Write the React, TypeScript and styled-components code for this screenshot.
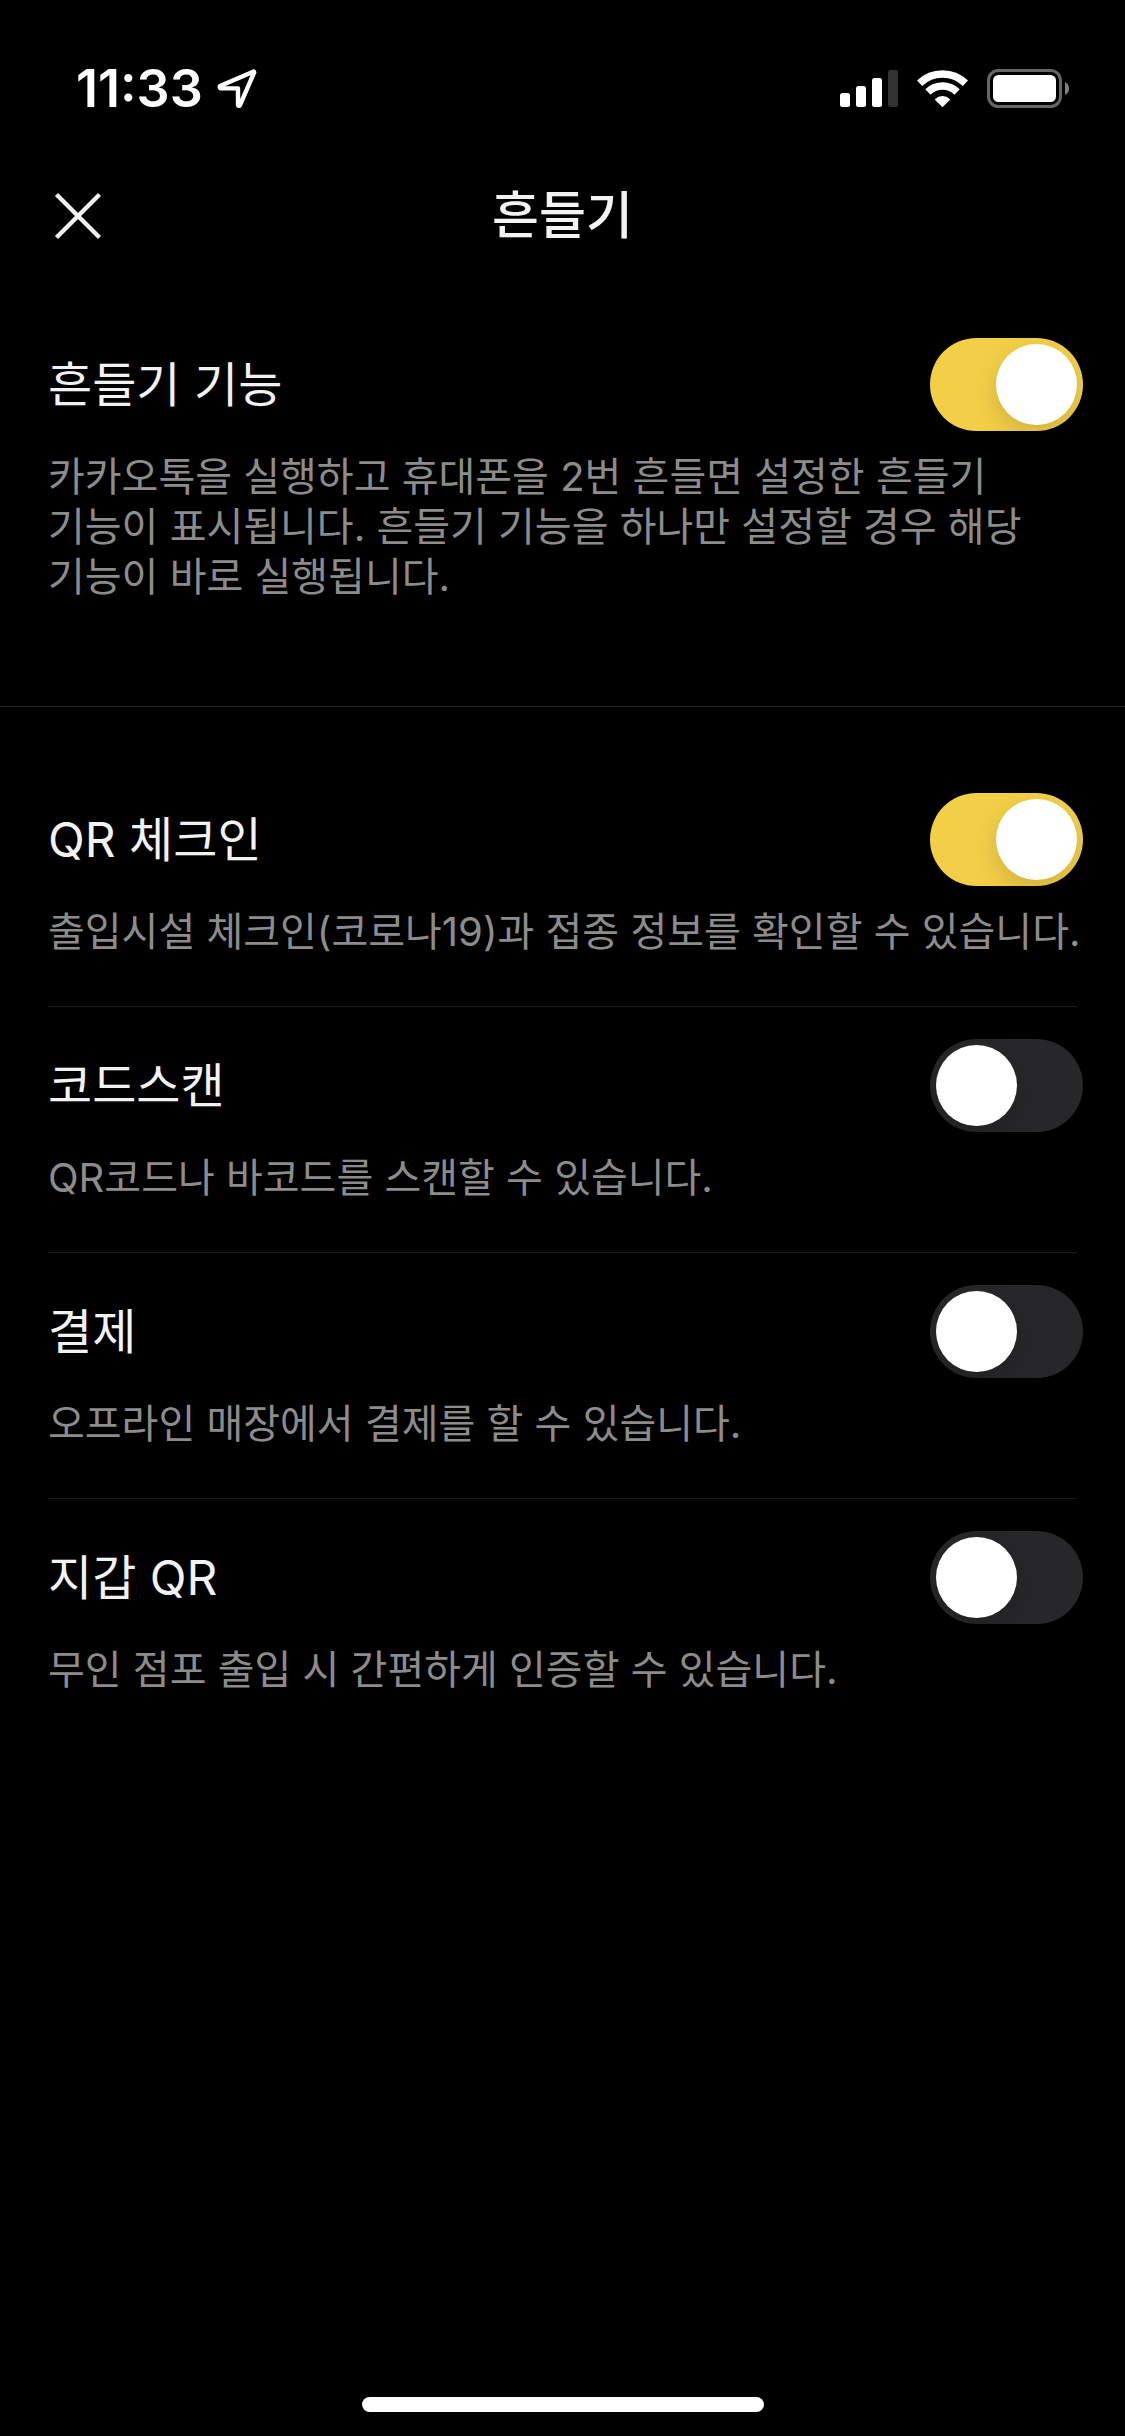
import React, { useState } from 'react';
import styled, { createGlobalStyle } from 'styled-components';

const GlobalStyle = createGlobalStyle`
  * { box-sizing: border-box; }
  body {
    margin: 0;
    background: #000;
    color: #f2f2f2;
    font-family: Inter, "Noto Sans CJK KR", sans-serif;
  }
`;

const Screen = styled.div`
  display: flex;
  flex-direction: column;
  min-height: 100vh;
  background: #000;
`;

const StatusBar = styled.div`
  display: flex;
  align-items: center;
  justify-content: space-between;
  height: 132px;
  padding: 46px 56px 0 76px;
  color: #fff;
`;

const StatusGroup = styled.div<{ $gap: number }>`
  display: flex;
  align-items: center;
  gap: ${({ $gap }) => $gap}px;
`;

const Time = styled.time`
  font-size: 52px;
  line-height: 60px;
  font-weight: 600;
`;

const Header = styled.header`
  display: grid;
  grid-template-columns: 1fr auto 1fr;
  align-items: center;
  height: 168px;
  padding: 0 48px;
`;

const CloseButton = styled.button`
  display: flex;
  align-items: center;
  justify-content: center;
  justify-self: start;
  width: 60px;
  height: 60px;
  padding: 0;
  border: 0;
  background: none;
  color: #f2f2f2;
`;

const Title = styled.h1`
  margin: 0;
  font-size: 51px;
  line-height: 60px;
  font-weight: 500;
`;

const MainSection = styled.section`
  padding: 6px 0 55px;
  border-bottom: 1px solid #242424;
`;

const OptionList = styled.section`
  padding-top: 54px;
`;

const Divider = styled.hr`
  height: 1px;
  margin: 0 48px;
  border: 0;
  background: #1c1c1c;
`;

const Row = styled.div`
  display: grid;
  grid-template-columns: 1fr auto;
  row-gap: 21px;
  align-items: center;
  padding: 32px 42px 49px 48px;
`;

const Label = styled.label`
  font-size: 48px;
  line-height: 60px;
`;

const Description = styled.p`
  grid-column: 1 / -1;
  margin: 0;
  color: #8c8c8c;
  font-size: 40px;
  line-height: 50px;
  word-break: keep-all;
`;

const Switch = styled.input`
  appearance: none;
  display: flex;
  width: 153px;
  height: 93px;
  margin: 0;
  padding: 6px;
  border-radius: 47px;
  background: #272729;
  overflow: hidden;

  &::before {
    content: "";
    width: 81px;
    height: 81px;
    border-radius: 50%;
    background: #fff;
    box-shadow: 0 9px 24px rgba(0, 0, 0, 0.15);
  }

  &:checked {
    justify-content: flex-end;
    background: #f3cf48;
  }
`;

const HomeArea = styled.footer`
  display: flex;
  justify-content: center;
  margin-top: auto;
  padding-bottom: 24px;
`;

const HomeIndicator = styled.div`
  width: 402px;
  height: 15px;
  border-radius: 8px;
  background: #fff;
`;

const LocationIcon = () => (
  <svg width="40" height="40" viewBox="0 0 40 40" fill="none" aria-hidden="true">
    <path
      d="M36.8 2.6 L3 17 Q2.2 18.8 3.8 19.4 L21 19.4 L21 36.2 Q22 37.6 23 36.2 L37.2 3.4 Z"
      stroke="currentColor"
      strokeWidth="4.4"
      strokeLinejoin="round"
    />
  </svg>
);

const SignalIcon = () => (
  <svg width="58" height="38" viewBox="0 0 58 38" fill="currentColor" aria-hidden="true">
    <rect x="0" y="23" width="10" height="14" rx="2.5" />
    <rect x="16" y="16" width="10" height="21" rx="2.5" />
    <rect x="32" y="8" width="10" height="29" rx="2.5" />
    <rect x="48" y="0" width="10" height="37" rx="2.5" fill="#333" />
  </svg>
);

const WifiIcon = () => (
  <svg width="51" height="38" viewBox="0 0 51 38" fill="none" stroke="currentColor" strokeWidth="7.6" aria-hidden="true">
    <path d="M2.6 13.2 A33 33 0 0 1 48.4 13.2" />
    <path d="M10.9 21.9 A21 21 0 0 1 40.1 21.9" />
    <path
      d="M25.5 36.2 L18.7 29.4 A9.6 9.6 0 0 1 32.3 29.4 Z"
      fill="currentColor"
      strokeWidth="1.4"
      strokeLinejoin="round"
    />
  </svg>
);

const BatteryIcon = () => (
  <svg width="82" height="40" viewBox="0 0 82 40" aria-hidden="true">
    <rect x="1.5" y="1.5" width="72" height="36" rx="10" fill="none" stroke="#666" strokeWidth="3" />
    <rect x="6" y="6" width="63" height="27" rx="5.5" fill="currentColor" />
    <path d="M78 13 Q82 15 82 19.5 Q82 24 78 26 Z" fill="#808080" />
  </svg>
);

const CloseIcon = () => (
  <svg width="48" height="48" viewBox="0 0 48 48" stroke="currentColor" strokeWidth="4.4" aria-hidden="true">
    <path d="M2.5 2.5 L45.5 45.5 M45.5 2.5 L2.5 45.5" />
  </svg>
);

interface Setting {
  id: string;
  label: string;
  description: string;
  on: boolean;
}

const shake: Setting = {
  id: 'shake',
  label: '흔들기 기능',
  description:
    '카카오톡을 실행하고 휴대폰을 2번 흔들면 설정한 흔들기 기능이 표시됩니다. 흔들기 기능을 하나만 설정할 경우 해당 기능이 바로 실행됩니다.',
  on: true,
};

const options: Setting[] = [
  {
    id: 'check-in',
    label: 'QR 체크인',
    description: '출입시설 체크인(코로나19)과 접종 정보를 확인할 수 있습니다.',
    on: true,
  },
  { id: 'scan', label: '코드스캔', description: 'QR코드나 바코드를 스캔할 수 있습니다.', on: false },
  { id: 'pay', label: '결제', description: '오프라인 매장에서 결제를 할 수 있습니다.', on: false },
  { id: 'wallet', label: '지갑 QR', description: '무인 점포 출입 시 간편하게 인증할 수 있습니다.', on: false },
];

const SettingRow = ({ setting }: { setting: Setting }) => {
  const [on, setOn] = useState(setting.on);
  return (
    <Row>
      <Label htmlFor={setting.id}>{setting.label}</Label>
      <Switch
        id={setting.id}
        type="checkbox"
        role="switch"
        checked={on}
        aria-describedby={`${setting.id}-description`}
        onChange={(event) => setOn(event.target.checked)}
      />
      <Description id={`${setting.id}-description`}>{setting.description}</Description>
    </Row>
  );
};

export default function App() {
  return (
    <Screen lang="ko">
      <GlobalStyle />
      <StatusBar>
        <StatusGroup $gap={14}>
          <Time>11:33</Time>
          <LocationIcon />
        </StatusGroup>
        <StatusGroup $gap={19}>
          <SignalIcon />
          <WifiIcon />
          <BatteryIcon />
        </StatusGroup>
      </StatusBar>
      <Header>
        <CloseButton type="button" aria-label="닫기">
          <CloseIcon />
        </CloseButton>
        <Title>흔들기</Title>
      </Header>
      <main>
        <MainSection>
          <SettingRow setting={shake} />
        </MainSection>
        <OptionList>
          {options.map((option, index) => (
            <React.Fragment key={option.id}>
              {index > 0 && <Divider />}
              <SettingRow setting={option} />
            </React.Fragment>
          ))}
        </OptionList>
      </main>
      <HomeArea>
        <HomeIndicator />
      </HomeArea>
    </Screen>
  );
}
